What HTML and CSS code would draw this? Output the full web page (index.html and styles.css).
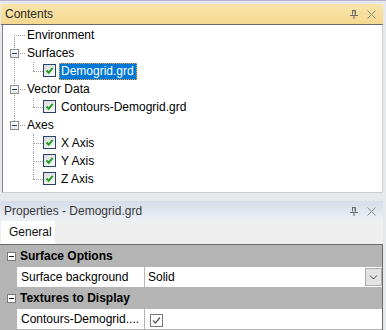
FILE: index.html
```html
<!DOCTYPE html>
<html lang="en">
<head>
    <meta charset="UTF-8">
    <title>Contents / Properties</title>
    <link rel="stylesheet" href="styles.css">
</head>
<body>
    <section class="pane">
        <header class="pane-head contents-head">
            <span class="pane-title">Contents</span>
            <span class="pane-tools">
                <svg class="pin" width="8" height="9" viewBox="0 0 8 9"><path d="M2 0.5h3.5M2.5 0.5v4M5 0.5v4M5.5 0.5v4M0 5.5h8M4 5.5v3.5" stroke="#6b6b6b" fill="none"/></svg>
                <svg class="close" width="9" height="9" viewBox="0 0 9 9"><path d="M0.5 0.5l8 8M8.5 0.5l-8 8" stroke="#8c8c8c" fill="none"/></svg>
            </span>
        </header>
        <div class="tree">
            <ul>
                <li class="first"><div class="row"><span class="label">Environment</span></div></li>
                <li>
                    <div class="row"><span class="exp"></span><span class="label">Surfaces</span></div>
                    <ul class="kids">
                        <li class="last"><div class="row"><span class="chk"><svg width="11" height="11" viewBox="0 0 11 11"><path d="M2.5 5.5l2.2 2.3 4-5" stroke="#22a022" stroke-width="2" fill="none"/></svg></span><span class="label selected">Demogrid.grd</span></div></li>
                    </ul>
                </li>
                <li>
                    <div class="row"><span class="exp"></span><span class="label">Vector Data</span></div>
                    <ul class="kids">
                        <li class="last"><div class="row"><span class="chk"><svg width="11" height="11" viewBox="0 0 11 11"><path d="M2.5 5.5l2.2 2.3 4-5" stroke="#22a022" stroke-width="2" fill="none"/></svg></span><span class="label">Contours-Demogrid.grd</span></div></li>
                    </ul>
                </li>
                <li class="last">
                    <div class="row"><span class="exp"></span><span class="label">Axes</span></div>
                    <ul class="kids">
                        <li><div class="row"><span class="chk"><svg width="11" height="11" viewBox="0 0 11 11"><path d="M2.5 5.5l2.2 2.3 4-5" stroke="#22a022" stroke-width="2" fill="none"/></svg></span><span class="label">X Axis</span></div></li>
                        <li><div class="row"><span class="chk"><svg width="11" height="11" viewBox="0 0 11 11"><path d="M2.5 5.5l2.2 2.3 4-5" stroke="#22a022" stroke-width="2" fill="none"/></svg></span><span class="label">Y Axis</span></div></li>
                        <li class="last"><div class="row"><span class="chk"><svg width="11" height="11" viewBox="0 0 11 11"><path d="M2.5 5.5l2.2 2.3 4-5" stroke="#22a022" stroke-width="2" fill="none"/></svg></span><span class="label">Z Axis</span></div></li>
                    </ul>
                </li>
            </ul>
        </div>
    </section>

    <section class="pane props">
        <header class="pane-head props-head">
            <span class="pane-title">Properties - Demogrid.grd</span>
            <span class="pane-tools">
                <svg class="pin" width="8" height="9" viewBox="0 0 8 9"><path d="M2 0.5h3.5M2.5 0.5v4M5 0.5v4M5.5 0.5v4M0 5.5h8M4 5.5v3.5" stroke="#6b6b6b" fill="none"/></svg>
                <svg class="close" width="9" height="9" viewBox="0 0 9 9"><path d="M0.5 0.5l8 8M8.5 0.5l-8 8" stroke="#8c8c8c" fill="none"/></svg>
            </span>
        </header>
        <div class="tabs">
            <div class="tab">General</div>
        </div>
        <div class="grid">
            <div class="cat"><span class="exp"></span>Surface Options</div>
            <div class="prop">
                <div class="name">Surface background</div>
                <div class="value">Solid<span class="drop"><svg width="9" height="5" viewBox="0 0 9 5"><path d="M1 0.5l3.5 3.5 3.5-3.5" stroke="#404040" fill="none"/></svg></span></div>
            </div>
            <div class="cat"><span class="exp"></span>Textures to Display</div>
            <div class="prop">
                <div class="name">Contours-Demogrid....</div>
                <div class="value"><span class="vchk"><svg width="11" height="11" viewBox="0 0 11 11"><path d="M2 5.5l2.5 2.5 4.5-5.5" stroke="#555" stroke-width="1.2" fill="none"/></svg></span></div>
            </div>
        </div>
    </section>
</body>
</html>
```

FILE: styles.css
```css
body {
    margin: 0;
    width: 386px;
    height: 330px;
    overflow: hidden;
    background-color: #e6e8ec;
    border-top: 1px solid #b9b2cf;
    box-sizing: border-box;
    font-family: "Liberation Sans", Arial, sans-serif;
    font-size: 12px;
    color: #000;
}

.pane {
    width: 383px;
}

.pane-head {
    display: flex;
    align-items: center;
    justify-content: space-between;
    height: 20px;
    padding: 0 7px 0 4px;
    box-sizing: border-box;
}

.contents-head {
    margin: 3px 0 0 1px;
    width: 382px;
    height: 21px;
    background: linear-gradient(#f8e4aa, #f4d991);
    border-bottom: 1px solid #6a6a6a;
}

.props-head {
    margin-top: 8px;
    background: linear-gradient(#d5dce8, #eef1f6);
}

.pane-title {
    color: #2a2a2a;
}

.props-head .pane-title {
    color: #3a3a3a;
}

.pane-tools {
    display: flex;
    align-items: center;
    gap: 9px;
}

.close {
    margin-top: 1px;
}

/* tree */

.tree {
    margin-left: 2px;
    width: 379px;
    height: 166px;
    padding-top: 1px;
    background: #fff;
    border-left: 1px solid #828790;
    border-right: 1px solid #cfd0d3;
    border-bottom: 1px solid #cfd0d3;
    box-sizing: content-box;
}

.tree ul {
    list-style: none;
    margin: 0;
    padding: 0;
}

.tree li {
    position: relative;
}

.tree li::before {
    content: "";
    position: absolute;
    left: 11px;
    top: 0;
    bottom: 0;
    border-left: 1px dotted #a0a0a0;
}

.tree li.first::before {
    top: 9px;
}

.tree li.last::before {
    bottom: auto;
    height: 9px;
}

.row {
    position: relative;
    height: 18px;
    display: flex;
    align-items: center;
    padding-left: 22px;
}

.row::before {
    content: "";
    position: absolute;
    left: 11px;
    top: 9px;
    width: 11px;
    border-top: 1px dotted #a0a0a0;
}

.kids li::before {
    left: 30px;
}

.kids .row {
    padding-left: 56px;
}

.kids .row::before {
    left: 30px;
    width: 10px;
}

.label {
    height: 15px;
    line-height: 15px;
    padding: 0 2px 0 1px;
    border: 1px solid transparent;
    white-space: nowrap;
}

.label.selected {
    background-color: #0078d7;
    color: #fff;
    border: 1px dotted #f6a43c;
}

.exp {
    position: absolute;
    left: 7px;
    top: 5px;
    width: 9px;
    height: 9px;
    box-sizing: border-box;
    border: 1px solid #8e8f8f;
    background: linear-gradient(#fff, #e8e8e8);
    z-index: 1;
}

.exp::after {
    content: "";
    position: absolute;
    left: 1px;
    top: 3px;
    width: 5px;
    height: 1px;
    background: #1d3c66;
}

.chk {
    position: absolute;
    left: 40px;
    top: 2px;
    width: 13px;
    height: 13px;
    box-sizing: border-box;
    border: 1px solid #24446c;
    background: linear-gradient(135deg, #d8d8d8, #fdfdfd);
    display: flex;
    align-items: center;
    justify-content: center;
}

/* properties */

.tabs {
    height: 23px;
    background: #eeeeee;
    padding-left: 1px;
}

.tab {
    width: 54px;
    height: 23px;
    line-height: 23px;
    padding-left: 8px;
    box-sizing: border-box;
    background: #fff;
    color: #111;
}

.grid {
    background: #b4b4b4;
    border-top: 1px solid #6b6b6b;
    border-right: 1px solid #6b6b6b;
    height: 90px;
}

.cat {
    position: relative;
    height: 22px;
    line-height: 22px;
    padding-left: 20px;
    font-weight: bold;
}

.cat .exp {
    top: 7px;
    background: #fff;
    border-color: #7a7a7a;
}

.cat .exp::after {
    background: #222;
}

.prop {
    display: flex;
    gap: 1px;
    height: 20px;
    padding-left: 17px;
}

.name,
.value {
    background: #fff;
    line-height: 20px;
    white-space: nowrap;
}

.name {
    width: 127px;
    padding-left: 4px;
    box-sizing: border-box;
    overflow: hidden;
}

.value {
    position: relative;
    flex: 1;
    padding-left: 3px;
}

.drop {
    position: absolute;
    right: 0;
    top: 1px;
    width: 17px;
    height: 18px;
    box-sizing: border-box;
    border: 1px solid #adadad;
    background: #e3e3e3;
    display: flex;
    align-items: center;
    justify-content: center;
}

.vchk {
    position: absolute;
    left: 5px;
    top: 5px;
    width: 13px;
    height: 13px;
    box-sizing: border-box;
    border: 1px solid #7a7a7a;
    background: #fff;
    display: flex;
    align-items: center;
    justify-content: center;
}
```
